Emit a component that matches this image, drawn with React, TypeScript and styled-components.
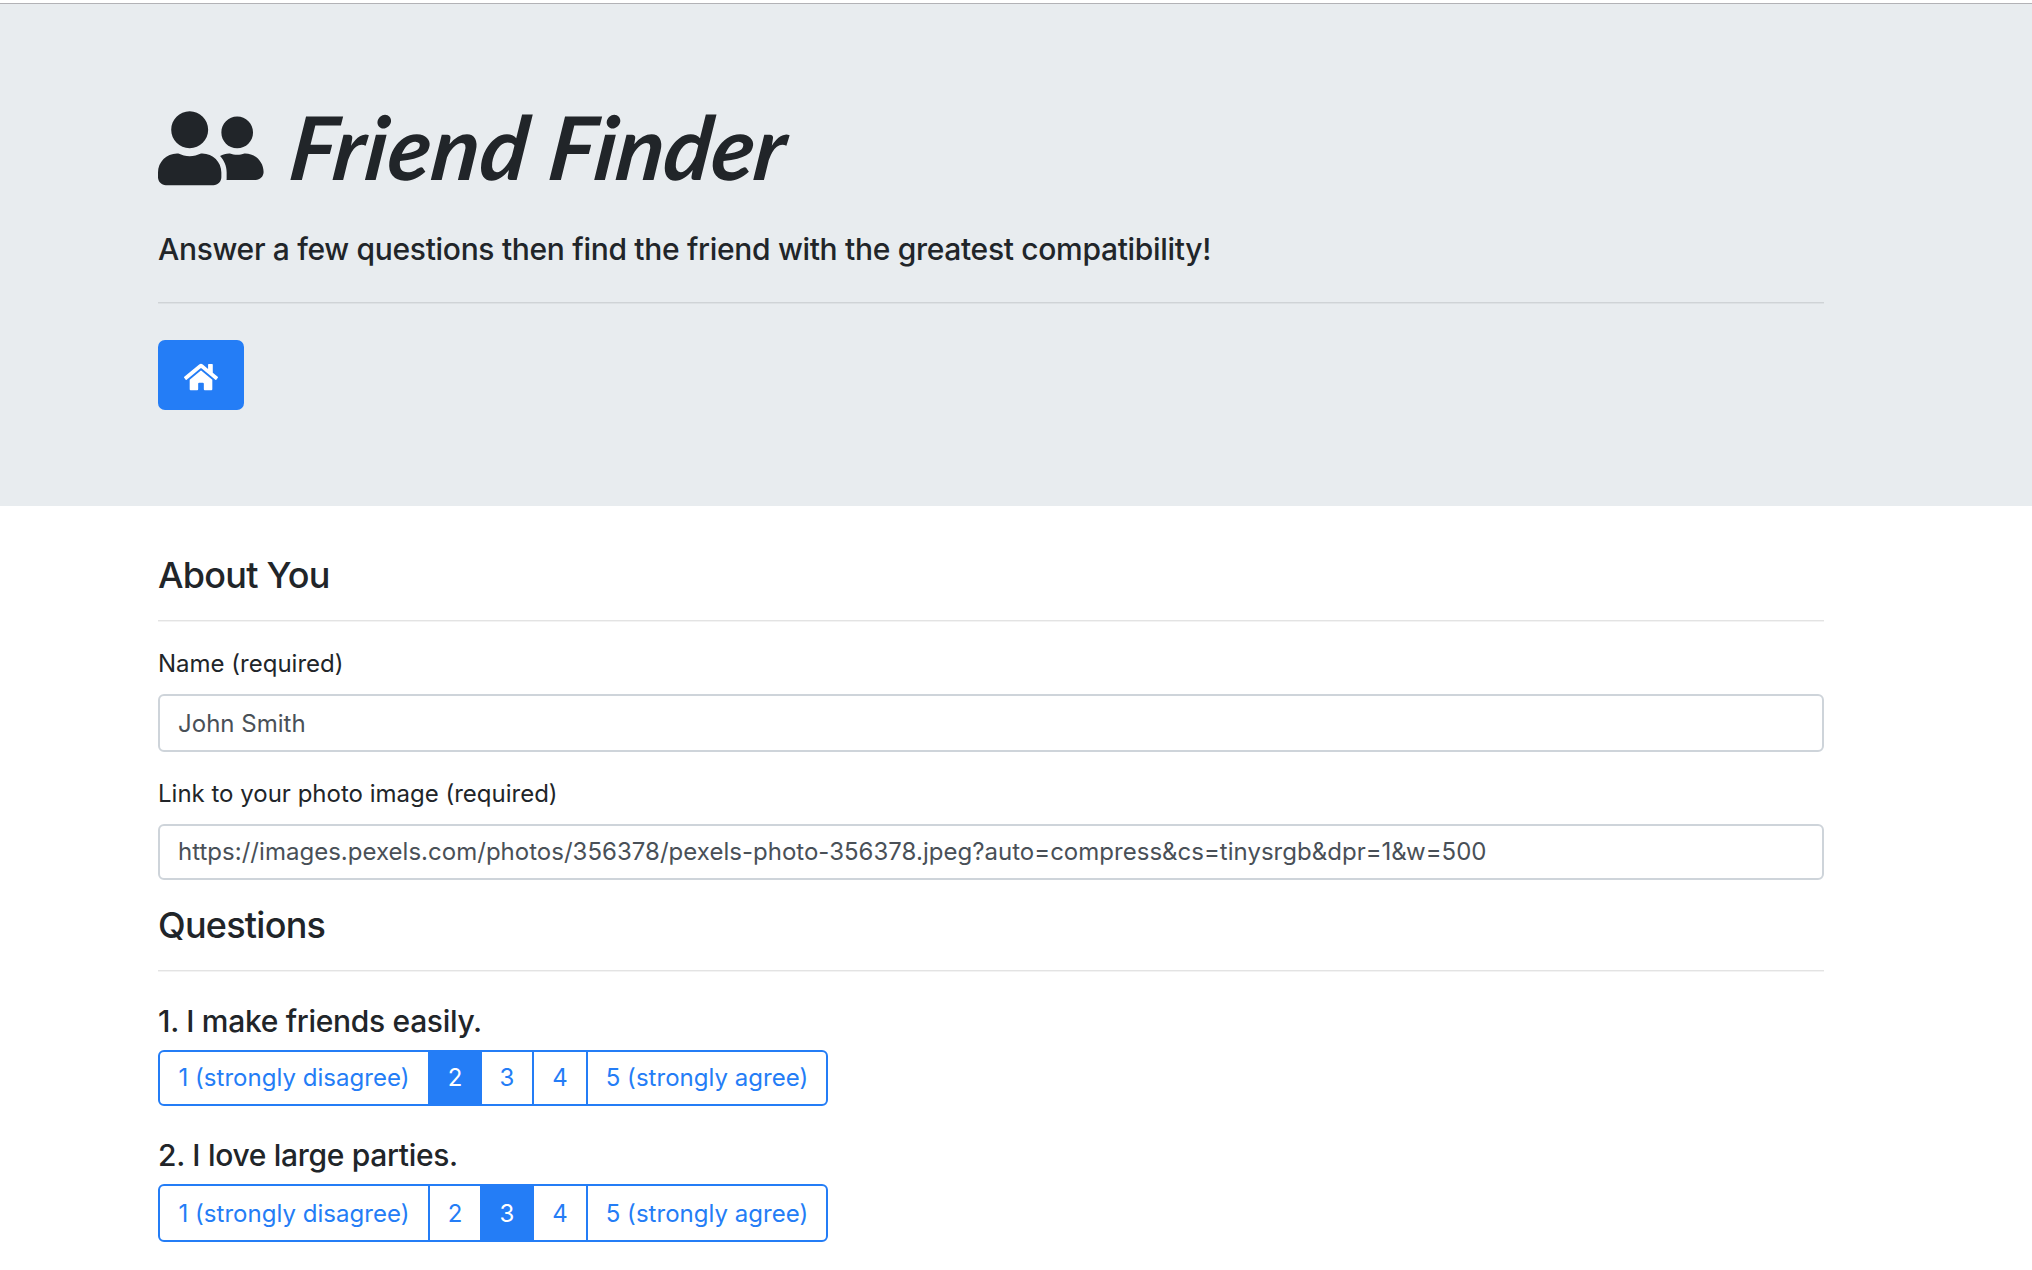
import React, { useState } from "react";
import styled, { createGlobalStyle } from "styled-components";
import { FaHome, FaUserFriends } from "react-icons/fa";

const GlobalStyle = createGlobalStyle`
  *, *::before, *::after { box-sizing: border-box; }
  html, body { margin: 0; height: 100%; }
  body {
    overflow: hidden;
    background: #fff;
    color: #212529;
    font-family: Inter, "Liberation Sans", sans-serif;
    font-size: 24px;
    font-weight: 400;
  }
`;

const Page = styled.div`
  height: 1270px;
  overflow: hidden;
  padding-top: 3px;
`;

const Jumbotron = styled.header`
  height: 503px;
  padding: 102px 0 96px;
  border-top: 1px solid #b2b2b6;
  background: #e8ecef;
`;

const Container = styled.div`
  width: 1666px;
  margin-left: 158px;
`;

const Brand = styled.h1`
  display: flex;
  align-items: flex-start;
  height: 85px;
  margin: 0;
`;

const FriendsIcon = styled(FaUserFriends)`
  flex: none;
  width: 105.6px;
  height: 84.5px;
`;

const BrandName = styled.span`
  display: flex;
  gap: 20px;
  margin: 3px 0 0 23px;
  font-family: Lato, sans-serif;
  font-size: 88px;
  font-style: italic;
  font-weight: 700;
  line-height: 75px;
  transform: skewX(-7deg);
  transform-origin: 0 72px;
`;

const BrandWord = styled.span<{ $tracking: number }>`
  letter-spacing: ${(p) => p.$tracking}px;
`;

const Lead = styled.p`
  margin: 38px 0 33px;
  font-size: 30px;
  font-weight: 500;
  line-height: 40px;
  letter-spacing: -0.315px;
`;

const Rule = styled.hr<{ $strong?: boolean }>`
  height: 2px;
  margin: 0;
  border: 0;
  border-top: 1px solid ${(p) => (p.$strong ? "#cfd3d6" : "#e3e3e3")};
  background: ${(p) => (p.$strong ? "#dde1e4" : "#f3f3f3")};
`;

const HomeButton = styled.button`
  display: flex;
  align-items: center;
  justify-content: center;
  width: 86px;
  height: 70px;
  margin-top: 36px;
  padding: 4px 0 0;
  border: 0;
  border-radius: 7px;
  background: #247df6;
  color: #fff;
`;

const HomeIcon = styled(FaHome)`
  width: 34px;
  height: 30.2px;
`;

const Form = styled.form`
  padding-top: 47px;
`;

const SectionTitle = styled.h2`
  margin: 0 0 23px;
  font-size: 36px;
  font-weight: 500;
  line-height: 44px;
  letter-spacing: -0.75px;
`;

const Field = styled.div`
  margin: 24px 0 23px;
`;

const Label = styled.label`
  display: block;
  margin-bottom: 12px;
  line-height: 36px;
`;

const TextInput = styled.input<{ $height: number }>`
  display: block;
  width: 100%;
  height: ${(p) => p.$height}px;
  padding: 0 18px ${(p) => (p.$height < 58 ? 2 : 0)}px;
  border: 2px solid #ced4da;
  border-radius: 6px;
  outline: 0;
  background: #fff;
  color: #495057;
  font: inherit;
  letter-spacing: 0.02px;
`;

const Question = styled.section`
  margin-top: 31px;
`;

const QuestionText = styled.h3`
  margin: 0 0 11px;
  font-size: 30px;
  font-weight: 500;
  line-height: 36px;
  letter-spacing: -0.31px;
`;

const Scale = styled.div<{ $height: number }>`
  display: flex;
  height: ${(p) => p.$height}px;
`;

const ScaleOption = styled.button<{ $width: number; $active: boolean; $lift: number }>`
  flex: none;
  width: ${(p) => p.$width}px;
  padding: 0 0 ${(p) => p.$lift}px;
  border: 2px solid #247df6;
  background: ${(p) => (p.$active ? "#247df6" : "#fff")};
  color: ${(p) => (p.$active ? "#fff" : "#247df6")};
  font: inherit;
  letter-spacing: 0.03px;
  white-space: nowrap;

  & + & { margin-left: -2px; }
  &:first-child { border-radius: 6px 0 0 6px; }
  &:last-child { border-radius: 0 6px 6px 0; }
`;

const OPTIONS = [
  { label: "1 (strongly disagree)", width: 272 },
  { label: "2", width: 54 },
  { label: "3", width: 54 },
  { label: "4", width: 56 },
  { label: "5 (strongly agree)", width: 242 },
];

const QUESTIONS = [
  { text: "1. I make friends easily.", answer: 2, height: 56, lift: 2 },
  { text: "2. I love large parties.", answer: 3, height: 58, lift: 0 },
];

type QuestionProps = { text: string; answer: number; height: number; lift: number };

function QuestionItem({ text, answer, height, lift }: QuestionProps) {
  const [selected, setSelected] = useState(answer);
  return (
    <Question>
      <QuestionText>{text}</QuestionText>
      <Scale $height={height}>
        {OPTIONS.map((option, i) => (
          <ScaleOption
            key={option.label}
            type="button"
            $width={option.width}
            $lift={lift}
            $active={selected === i + 1}
            onClick={() => setSelected(i + 1)}
          >
            {option.label}
          </ScaleOption>
        ))}
      </Scale>
    </Question>
  );
}

export default function App() {
  return (
    <Page>
      <GlobalStyle />
      <Jumbotron>
        <Container>
          <Brand>
            <FriendsIcon />
            <BrandName>
              <BrandWord $tracking={0.9}>Friend</BrandWord>
              <BrandWord $tracking={0}>Finder</BrandWord>
            </BrandName>
          </Brand>
          <Lead>Answer a few questions then find the friend with the greatest compatibility!</Lead>
          <Rule $strong />
          <HomeButton type="button" aria-label="Home">
            <HomeIcon />
          </HomeButton>
        </Container>
      </Jumbotron>
      <Container>
        <Form>
          <SectionTitle>About You</SectionTitle>
          <Rule />
          <Field>
            <Label htmlFor="name">Name (required)</Label>
            <TextInput id="name" $height={58} defaultValue="John Smith" />
          </Field>
          <Field>
            <Label htmlFor="photo">Link to your photo image (required)</Label>
            <TextInput
              id="photo"
              $height={56}
              spellCheck={false}
              defaultValue="https://images.pexels.com/photos/356378/pexels-photo-356378.jpeg?auto=compress&cs=tinysrgb&dpr=1&w=500"
            />
          </Field>
          <SectionTitle>Questions</SectionTitle>
          <Rule />
          {QUESTIONS.map((q) => (
            <QuestionItem key={q.text} {...q} />
          ))}
        </Form>
      </Container>
    </Page>
  );
}
